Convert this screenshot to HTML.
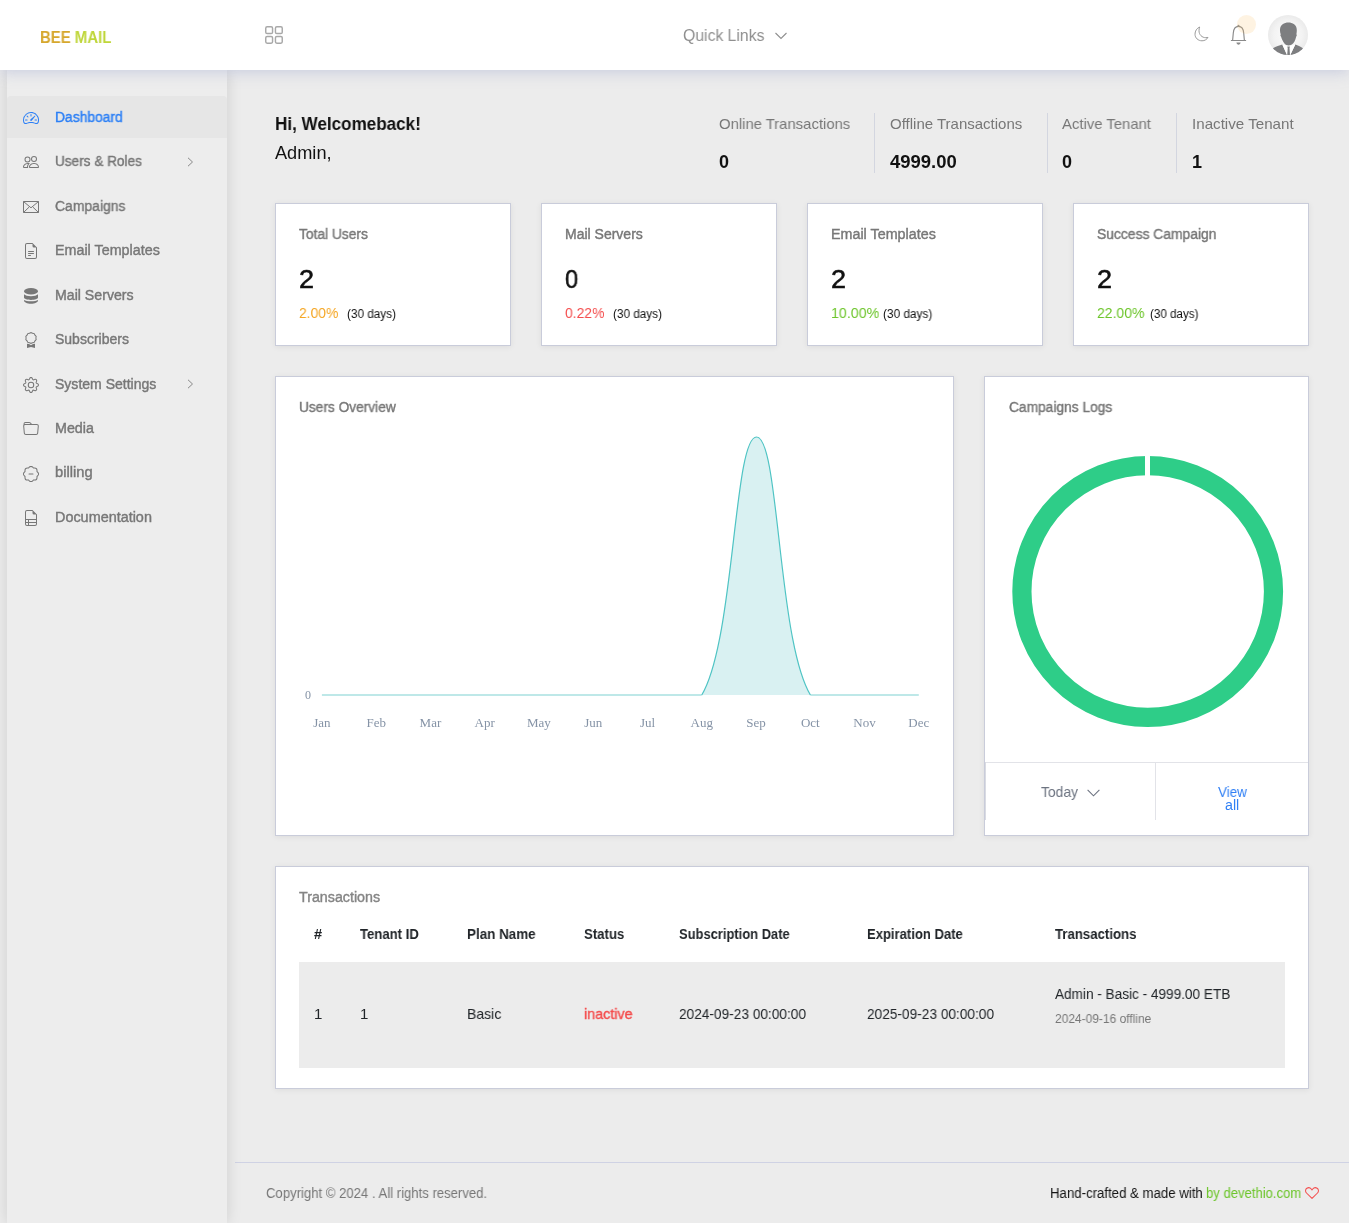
<!DOCTYPE html>
<html><head><meta charset="utf-8">
<style>
*{box-sizing:border-box;margin:0;padding:0}
html,body{width:1349px;height:1223px;overflow:hidden;background:#ececec;font-family:"Liberation Sans",sans-serif;}
.a{position:absolute;white-space:nowrap;line-height:1;will-change:transform}
#header{position:absolute;left:0;top:0;width:1349px;height:70px;background:#fff;z-index:5;box-shadow:0 2px 14px rgba(140,150,200,.38)}
#sidebar{position:absolute;left:7px;top:70px;width:220px;height:1153px;background:#ededed;box-shadow:0 0 14px rgba(0,0,0,.13);z-index:3}
.card{position:absolute;background:#fff;border:1px solid #c9ccda;box-shadow:0 1px 6px rgba(0,0,0,.07)}
.ico{position:absolute;left:16px}
.chev{position:absolute;left:180px}
</style></head>
<body>
<div id="header">
<div class="a" id="logo" style="left:40.4px;top:30.36px;font-size:16px;color:#000;font-weight:bold;transform:scaleX(0.9326);transform-origin:0 0;"><span style="color:#d6a72d">BEE</span> <span style="color:#bfd63a">MAIL</span></div>
<svg class="a" style="left:265px;top:26px" width="18" height="18" viewBox="0 0 18 18" fill="none" stroke="#a8a8a8" stroke-width="1.45"><rect x="0.75" y="0.75" width="6.8" height="6.8" rx="1.4"/><rect x="10.45" y="0.75" width="6.8" height="6.8" rx="1.4"/><rect x="0.75" y="10.45" width="6.8" height="6.8" rx="1.4"/><rect x="10.45" y="10.45" width="6.8" height="6.8" rx="1.4"/></svg>
<div class="a" id="ql" style="left:682.8px;top:28.46px;font-size:16px;color:#8f8f8f;font-weight:normal;transform:scaleX(0.9842);transform-origin:0 0;">Quick Links</div>
<svg class="a" style="left:775px;top:32px" width="12" height="8" viewBox="0 0 12 8" fill="none" stroke="#8f8f8f" stroke-width="1.1"><path d="M0.5 1 L6 6.5 L11.5 1"/></svg>
<svg class="a" style="left:1194px;top:26px" width="16" height="16" viewBox="0 0 16 16"><path fill="none" stroke="#9a9a9a" stroke-width="1" d="M5.7 1C2.8 2.2 1 5 1 8.2 1 12 4.2 14.8 8 14.8c2.6 0 4.8-1.3 6-3.4-.7.2-1.5.3-2.2.3C8 11.7 5 8.6 5 4.8c0-1.4.2-2.6.7-3.8z"/></svg>
<svg class="a" style="left:1230px;top:24px" width="18" height="22" viewBox="0 0 18 22"><circle cx="8.5" cy="1.7" r="1" fill="#8a8a8a"/><path fill="none" stroke="#8a8a8a" stroke-width="1.15" stroke-linejoin="round" d="M2.6 16.5 3.3 9C3.6 5 5.6 2.3 8.5 2.3S13.4 5 13.7 9l.7 7.5M.9 16.5h15.2"/><path fill="#8a8a8a" d="M6.4 18.5h4.2c-.3 1.3-1 2.2-2.1 2.2s-1.8-.9-2.1-2.2z"/></svg>
<div class="a" style="left:1236.5px;top:14.6px;width:18.8px;height:18.8px;border-radius:50%;background:rgba(248,196,110,.2)"></div>
<div class="a" style="left:1268px;top:15px;width:40px;height:40px;border-radius:50%;background:radial-gradient(circle at 50% 50%,#fdfdfd 0,#f3f3f3 50%,#dedede 100%);overflow:hidden"><svg width="40" height="40" viewBox="0 0 40 40"><path fill="#7d7e80" d="M20.4 7.5C24.5 7.5 28.8 9.5 28.8 15c0 2-.2 3.5-.4 4.3.6.5.5 1.7-.2 2.2-.6 2.5-1.3 4.4-1.7 5-1.5 2.5-3.5 4.1-5.9 4.1s-4.1-1.6-5.5-4.1c-.5-1-1.5-3-2.1-5-.7-.5-.8-1.7-.2-2.2-.5-1-.8-2.5-.8-4.3 0-5.5 4.3-7.5 8.4-7.5z"/><path fill="#7d7e80" d="M0 40 4.9 33.3C8 31.3 11.5 30.2 14.3 29.4L19 40zM40 40 35 33.3C32 31.3 30 30.2 27.3 29.4L22.3 40z"/><path fill="#fff" d="M14.3 29.4 20.6 31l6.7-1.6L22.3 40H19z"/><path fill="#7d7e80" d="M19.3 31.4h2.6l-.4 1.8.5 6.8h-2.8l.5-6.8z"/></svg></div>
</div>
<div id="sidebar">
  <div class="a" style="left:0;top:26px;width:220px;height:42px;background:#e6e6e6;border-radius:4px 4px 0 0"></div>
  <div class="a" id="nav0" style="left:47.8px;top:39.95px;font-size:14px;color:#2b7ff6;font-weight:normal;transform:scaleX(0.9882);transform-origin:0 0;-webkit-text-stroke:.4px #2b7ff6;">Dashboard</div>
  <div class="ico a" style="top:40.3px"><svg width="16" height="16" viewBox="0 0 16 16"><path fill="#2b7ff6" d="M8 4a.5.5 0 0 1 .5.5V6a.5.5 0 0 1-1 0V4.5A.5.5 0 0 1 8 4zM3.732 5.732a.5.5 0 0 1 .707 0l.915.914a.5.5 0 1 1-.708.708l-.914-.915a.5.5 0 0 1 0-.707zM2 10a.5.5 0 0 1 .5-.5h1.586a.5.5 0 0 1 0 1H2.5A.5.5 0 0 1 2 10zm9.5 0a.5.5 0 0 1 .5-.5h1.5a.5.5 0 0 1 0 1H12a.5.5 0 0 1-.5-.5zm.754-4.246a.389.389 0 0 0-.527-.02L7.547 9.31a.91.91 0 1 0 1.302 1.258l3.434-4.297a.389.389 0 0 0-.029-.518z"/><path fill="#2b7ff6" fill-rule="evenodd" d="M0 10a8 8 0 1 1 15.547 2.661c-.442 1.253-1.845 1.602-2.932 1.25C11.309 13.488 9.475 13 8 13c-1.474 0-3.31.488-4.615.911-1.087.352-2.49.003-2.932-1.25A7.988 7.988 0 0 1 0 10zm8-7a7 7 0 0 0-6.603 9.329c.203.575.923.876 1.68.63C4.397 12.533 6.358 12 8 12s3.604.532 4.923.96c.757.245 1.477-.056 1.68-.631A7 7 0 0 0 8 3z"/></svg></div>
  <div class="a" id="nav1" style="left:47.8px;top:84.39px;font-size:14px;color:#777;font-weight:normal;transform:scaleX(0.9709);transform-origin:0 0;-webkit-text-stroke:.4px #777;">Users &amp; Roles</div>
  <div class="ico a" style="top:83.7px"><svg width="16" height="16" viewBox="0 0 16 16"><path fill="#777" d="M15 14s1 0 1-1-1-4-5-4-5 3-5 4 1 1 1 1h8Zm-7.978-1A.261.261 0 0 1 7 12.996c.001-.264.167-1.03.76-1.72C8.312 10.629 9.282 10 11 10c1.717 0 2.687.63 3.24 1.276.593.69.758 1.457.76 1.72l-.008.002a.274.274 0 0 1-.014.002H7.022ZM11 7a2 2 0 1 0 0-4 2 2 0 0 0 0 4Zm3-2a3 3 0 1 1-6 0 3 3 0 0 1 6 0ZM6.936 9.28a5.88 5.88 0 0 0-1.23-.247A7.35 7.35 0 0 0 5 9c-4 0-5 3-5 4 0 .667.333 1 1 1h4.216A2.238 2.238 0 0 1 5 13c0-1.01.377-2.042 1.09-2.904.243-.294.526-.569.846-.816ZM4.92 10A5.493 5.493 0 0 0 4 13H1c0-.26.164-1.03.76-1.724.545-.636 1.492-1.256 3.16-1.275ZM1.5 5.5a3 3 0 1 1 6 0 3 3 0 0 1-6 0Zm3-2a2 2 0 1 0 0 4 2 2 0 0 0 0-4Z"/></svg></div>
  <svg class="chev a" style="top:86.7px" width="7" height="10" viewBox="0 0 7 10"><path d="M1 .8 5.5 5 1 9.2" fill="none" stroke="#888" stroke-width="1"/></svg>
  <div class="a" id="nav2" style="left:47.8px;top:128.83px;font-size:14px;color:#777;font-weight:normal;transform:scaleX(0.9946);transform-origin:0 0;-webkit-text-stroke:.4px #777;">Campaigns</div>
  <div class="ico a" style="top:129.2px"><svg width="16" height="16" viewBox="0 0 16 16"><path fill="none" stroke="#777" stroke-width="1" d="M.5 2.5h15v11H.5zM.5 2.5 8 8.8l7.5-6.3M.5 13.5l5.6-5.4M15.5 13.5 9.9 8.1"/></svg></div>
  <div class="a" id="nav3" style="left:47.8px;top:173.27px;font-size:14px;color:#777;font-weight:normal;transform:scaleX(1.0228);transform-origin:0 0;-webkit-text-stroke:.4px #777;">Email Templates</div>
  <div class="ico a" style="top:172.6px"><svg width="16" height="16" viewBox="0 0 16 16"><path fill="#777" d="M5 8.5a.5.5 0 0 1 .5-.5h5a.5.5 0 0 1 0 1h-5a.5.5 0 0 1-.5-.5zm0 2a.5.5 0 0 1 .5-.5h5a.5.5 0 0 1 0 1h-5a.5.5 0 0 1-.5-.5zm0 2a.5.5 0 0 1 .5-.5h2a.5.5 0 0 1 0 1h-2a.5.5 0 0 1-.5-.5z"/><path fill="#777" d="M14 14V4.5L9.5 0H4a2 2 0 0 0-2 2v12a2 2 0 0 0 2 2h8a2 2 0 0 0 2-2zM9.5 3A1.5 1.5 0 0 0 11 4.5h2V14a1 1 0 0 1-1 1H4a1 1 0 0 1-1-1V2a1 1 0 0 1 1-1h5.5v2z"/></svg></div>
  <div class="a" id="nav4" style="left:47.8px;top:217.71px;font-size:14px;color:#777;font-weight:normal;transform:scaleX(1.0106);transform-origin:0 0;-webkit-text-stroke:.4px #777;">Mail Servers</div>
  <div class="ico a" style="top:218.1px"><svg width="16" height="16" viewBox="0 0 16 16"><g transform="translate(1 0)" fill="#777"><ellipse cx="7" cy="3.2" rx="7" ry="3.2"/><path d="M0 6.3C1.2 7.6 3.8 8.3 7 8.3s5.8-.7 7-2v3.3c0 1.4-3.1 2.3-7 2.3s-7-.9-7-2.3z"/><path d="M0 12c1.2 1 3.8 1.3 7 1.3s5.8-.3 7-1.3v.6c0 1.8-3.1 3.2-7 3.2s-7-1.4-7-3.2z"/></g></svg></div>
  <div class="a" id="nav5" style="left:47.8px;top:262.15px;font-size:14px;color:#777;font-weight:normal;-webkit-text-stroke:.4px #777;">Subscribers</div>
  <div class="ico a" style="top:261.5px"><svg width="16" height="16" viewBox="0 0 16 16"><path fill="#777" d="M9.669.864 8 0 6.331.864l-1.858.282-.842 1.68-1.337 1.32L2.6 6l-.306 1.854 1.337 1.32.842 1.68 1.858.282L8 12l1.669-.864 1.858-.282.842-1.68 1.337-1.32L13.4 6l.306-1.854-1.337-1.32-.842-1.68L9.669.864zm1.196 1.193.684 1.365 1.086 1.072L12.387 6l.248 1.506-1.086 1.072-.684 1.365-1.51.229L8 10.874l-1.355-.702-1.51-.229-.684-1.365-1.086-1.072L3.614 6l-.25-1.506 1.087-1.072.684-1.365 1.51-.229L8 1.126l1.356.702 1.509.229z"/><path fill="#777" d="M4 11.794V16l4-1 4 1v-4.206l-2.018.306L8 13.126 6.018 12.1 4 11.794z"/></svg></div>
  <div class="a" id="nav6" style="left:47.8px;top:306.59px;font-size:14px;color:#777;font-weight:normal;transform:scaleX(1.0018);transform-origin:0 0;-webkit-text-stroke:.4px #777;">System Settings</div>
  <div class="ico a" style="top:306.9px"><svg width="16" height="16" viewBox="0 0 16 16"><path fill="#777" d="M8 4.754a3.246 3.246 0 1 0 0 6.492 3.246 3.246 0 0 0 0-6.492zM5.754 8a2.246 2.246 0 1 1 4.492 0 2.246 2.246 0 0 1-4.492 0z"/><path fill="#777" d="M9.796 1.343c-.527-1.79-3.065-1.79-3.592 0l-.094.319a.873.873 0 0 1-1.255.52l-.292-.16c-1.64-.892-3.433.902-2.54 2.541l.159.292a.873.873 0 0 1-.52 1.255l-.319.094c-1.79.527-1.79 3.065 0 3.592l.319.094a.873.873 0 0 1 .52 1.255l-.16.292c-.892 1.64.901 3.434 2.541 2.54l.292-.159a.873.873 0 0 1 1.255.52l.094.319c.527 1.79 3.065 1.79 3.592 0l.094-.319a.873.873 0 0 1 1.255-.52l.292.16c1.64.893 3.434-.902 2.54-2.541l-.159-.292a.873.873 0 0 1 .52-1.255l.319-.094c1.79-.527 1.79-3.065 0-3.592l-.319-.094a.873.873 0 0 1-.52-1.255l.16-.292c.893-1.64-.902-3.433-2.541-2.54l-.292.159a.873.873 0 0 1-1.255-.52l-.094-.319zm-2.633.283c.246-.835 1.428-.835 1.674 0l.094.319a1.873 1.873 0 0 0 2.693 1.115l.291-.16c.764-.415 1.6.42 1.184 1.185l-.159.292a1.873 1.873 0 0 0 1.116 2.692l.318.094c.835.246.835 1.428 0 1.674l-.319.094a1.873 1.873 0 0 0-1.115 2.693l.16.291c.415.764-.42 1.6-1.185 1.184l-.291-.159a1.873 1.873 0 0 0-2.693 1.116l-.094.318c-.246.835-1.428.835-1.674 0l-.094-.319a1.873 1.873 0 0 0-2.692-1.115l-.292.16c-.764.415-1.6-.42-1.184-1.185l.159-.291A1.873 1.873 0 0 0 1.945 8.93l-.319-.094c-.835-.246-.835-1.428 0-1.674l.319-.094A1.873 1.873 0 0 0 3.06 4.377l-.16-.292c-.415-.764.42-1.6 1.185-1.184l.292.159a1.873 1.873 0 0 0 2.692-1.115l.094-.319z"/></svg></div>
  <svg class="chev a" style="top:308.9px" width="7" height="10" viewBox="0 0 7 10"><path d="M1 .8 5.5 5 1 9.2" fill="none" stroke="#888" stroke-width="1"/></svg>
  <div class="a" id="nav7" style="left:47.8px;top:351.03px;font-size:14px;color:#777;font-weight:normal;transform:scaleX(1.0215);transform-origin:0 0;-webkit-text-stroke:.4px #777;">Media</div>
  <div class="ico a" style="top:351.4px"><svg width="16" height="16" viewBox="0 0 16 16"><path fill="#777" d="M.54 3.87.5 3a2 2 0 0 1 2-2h3.672a2 2 0 0 1 1.414.586l.828.828A2 2 0 0 0 9.828 3h3.982a2 2 0 0 1 1.992 2.181l-.637 7A2 2 0 0 1 13.174 14H2.826a2 2 0 0 1-1.991-1.819l-.637-7a1.99 1.99 0 0 1 .342-1.31zM2.19 4a1 1 0 0 0-.996 1.09l.637 7a1 1 0 0 0 .995.91h10.348a1 1 0 0 0 .995-.91l.637-7A1 1 0 0 0 13.81 4H2.19zm4.69-1.707A1 1 0 0 0 6.172 2H2.5a1 1 0 0 0-1 .981l.006.139C1.72 3.042 1.95 3 2.19 3h5.396l-.707-.707z"/></svg></div>
  <div class="a" id="nav8" style="left:47.8px;top:395.47px;font-size:14px;color:#777;font-weight:normal;transform:scaleX(1.0495);transform-origin:0 0;-webkit-text-stroke:.4px #777;">billing</div>
  <div class="ico a" style="top:395.8px"><svg width="16" height="16" viewBox="0 0 16 16"><path fill="#777" d="M5.5 8a.5.5 0 0 1 .5-.5h4a.5.5 0 0 1 0 1H6a.5.5 0 0 1-.5-.5z"/><path fill="#777" d="m10.273 2.513-.921-.944.715-.698.622.637.89-.011a2.89 2.89 0 0 1 2.924 2.924l-.01.89.636.622a2.89 2.89 0 0 1 0 4.134l-.637.622.011.89a2.89 2.89 0 0 1-2.924 2.924l-.89-.01-.622.636a2.89 2.89 0 0 1-4.134 0l-.622-.637-.89.011a2.89 2.89 0 0 1-2.924-2.924l.01-.89-.636-.622a2.89 2.89 0 0 1 0-4.134l.637-.622-.011-.89a2.89 2.89 0 0 1 2.924-2.924l.89.01.622-.636a2.89 2.89 0 0 1 4.134 0l-.715.698a1.89 1.89 0 0 0-2.704 0l-.92.944-1.32-.016a1.89 1.89 0 0 0-1.911 1.912l.016 1.318-.944.921a1.89 1.89 0 0 0 0 2.704l.944.92-.016 1.32a1.89 1.89 0 0 0 1.912 1.911l1.318-.016.921.944a1.89 1.89 0 0 0 2.704 0l.92-.944 1.32.016a1.89 1.89 0 0 0 1.911-1.912l-.016-1.318.944-.921a1.89 1.89 0 0 0 0-2.704l-.944-.92.016-1.32a1.89 1.89 0 0 0-1.912-1.911l-1.318.016z"/></svg></div>
  <div class="a" id="nav9" style="left:47.8px;top:439.91px;font-size:14px;color:#777;font-weight:normal;transform:scaleX(1.0289);transform-origin:0 0;-webkit-text-stroke:.4px #777;">Documentation</div>
  <div class="ico a" style="top:440.3px"><svg width="16" height="16" viewBox="0 0 16 16"><path fill="#777" d="M14 14V4.5L9.5 0H4a2 2 0 0 0-2 2v12a2 2 0 0 0 2 2h8a2 2 0 0 0 2-2zM9.5 3A1.5 1.5 0 0 0 11 4.5h2V9H3V2a1 1 0 0 1 1-1h5.5v2zM3 12v-2h2v2H3zm0 1h2v2H4a1 1 0 0 1-1-1v-1zm3 2v-2h7v1a1 1 0 0 1-1 1H6zm7-3H6v-2h7v2z"/></svg></div>
</div>
<div id="main">
<div class="a" id="hi" style="left:275.3px;top:114.02px;font-size:19px;color:#111;font-weight:bold;transform:scaleX(0.8986);transform-origin:0 0;">Hi, Welcomeback!</div>
<div class="a" id="admin" style="left:275px;top:143.76px;font-size:18px;color:#111;font-weight:normal;transform:scaleX(1.0095);transform-origin:0 0;">Admin,</div>
<div class="a" id="stl0" style="left:718.6px;top:116.00px;font-size:15px;color:#777;font-weight:normal;transform:scaleX(0.9895);transform-origin:0 0;">Online Transactions</div>
<div class="a" id="stl1" style="left:890px;top:116.00px;font-size:15px;color:#777;font-weight:normal;transform:scaleX(0.9979);transform-origin:0 0;">Offline Transactions</div>
<div class="a" id="stl2" style="left:1061.8px;top:116.00px;font-size:15px;color:#777;font-weight:normal;transform:scaleX(0.9914);transform-origin:0 0;">Active Tenant</div>
<div class="a" id="stl3" style="left:1191.6px;top:116.00px;font-size:15px;color:#777;font-weight:normal;transform:scaleX(1.0100);transform-origin:0 0;">Inactive Tenant</div>
<div class="a" id="stv0" style="left:718.6px;top:152.76px;font-size:18px;color:#111;font-weight:bold;">0</div>
<div class="a" id="stv1" style="left:890px;top:152.76px;font-size:18px;color:#111;font-weight:bold;transform:scaleX(1.0263);transform-origin:0 0;">4999.00</div>
<div class="a" id="stv2" style="left:1061.8px;top:152.76px;font-size:18px;color:#111;font-weight:bold;">0</div>
<div class="a" id="stv3" style="left:1191.6px;top:152.76px;font-size:18px;color:#111;font-weight:bold;">1</div>
<div class="a" style="left:874.0px;top:113px;width:1px;height:60px;background:#d3d6e0"></div>
<div class="a" style="left:1046.9px;top:113px;width:1px;height:60px;background:#d3d6e0"></div>
<div class="a" style="left:1176.0px;top:113px;width:1px;height:60px;background:#d3d6e0"></div>
<div class="card" style="left:275px;top:203px;width:236px;height:143px"></div>
<div class="a" id="ct0" style="left:299.3px;top:227.35px;font-size:14px;color:#777;font-weight:normal;transform:scaleX(0.9842);transform-origin:0 0;-webkit-text-stroke:.4px #777;">Total Users</div>
<div class="a" id="cn0" style="left:299.3px;top:266.84px;font-size:25px;color:#111;font-weight:normal;transform:scaleX(1.0833);transform-origin:0 0;-webkit-text-stroke:.5px #111">2</div>
<div class="a" id="cp0" style="left:299.3px;top:305.30px;font-size:15px;color:#f5a623;font-weight:normal;transform:scaleX(0.9242);transform-origin:0 0;">2.00%</div>
<div class="a" id="cd0" style="left:346.9px;top:307.84px;font-size:12px;color:#111;font-weight:normal;transform:scaleX(0.9800);transform-origin:0 0;">(30 days)</div>
<div class="card" style="left:541px;top:203px;width:236px;height:143px"></div>
<div class="a" id="ct1" style="left:565.3px;top:227.35px;font-size:14px;color:#777;font-weight:normal;transform:scaleX(0.9990);transform-origin:0 0;-webkit-text-stroke:.4px #777;">Mail Servers</div>
<div class="a" id="cn1" style="left:565.3px;top:266.84px;font-size:25px;color:#111;font-weight:normal;transform:scaleX(0.9462);transform-origin:0 0;-webkit-text-stroke:.5px #111">0</div>
<div class="a" id="cp1" style="left:565.3px;top:305.30px;font-size:15px;color:#f44d4d;font-weight:normal;transform:scaleX(0.9288);transform-origin:0 0;">0.22%</div>
<div class="a" id="cd1" style="left:613px;top:307.84px;font-size:12px;color:#111;font-weight:normal;transform:scaleX(0.9800);transform-origin:0 0;">(30 days)</div>
<div class="card" style="left:807px;top:203px;width:236px;height:143px"></div>
<div class="a" id="ct2" style="left:831.3px;top:227.35px;font-size:14px;color:#777;font-weight:normal;transform:scaleX(1.0228);transform-origin:0 0;-webkit-text-stroke:.4px #777;">Email Templates</div>
<div class="a" id="cn2" style="left:831.3px;top:266.84px;font-size:25px;color:#111;font-weight:normal;transform:scaleX(1.0833);transform-origin:0 0;-webkit-text-stroke:.5px #111">2</div>
<div class="a" id="cp2" style="left:831.3px;top:305.30px;font-size:15px;color:#6cc52a;font-weight:normal;transform:scaleX(0.9494);transform-origin:0 0;">10.00%</div>
<div class="a" id="cd2" style="left:883.2px;top:307.84px;font-size:12px;color:#111;font-weight:normal;transform:scaleX(0.9858);transform-origin:0 0;">(30 days)</div>
<div class="card" style="left:1073px;top:203px;width:236px;height:143px"></div>
<div class="a" id="ct3" style="left:1097.3px;top:227.35px;font-size:14px;color:#777;font-weight:normal;transform:scaleX(0.9904);transform-origin:0 0;-webkit-text-stroke:.4px #777;">Success Campaign</div>
<div class="a" id="cn3" style="left:1097.3px;top:266.84px;font-size:25px;color:#111;font-weight:normal;transform:scaleX(1.0833);transform-origin:0 0;-webkit-text-stroke:.5px #111">2</div>
<div class="a" id="cp3" style="left:1097.3px;top:305.30px;font-size:15px;color:#6cc52a;font-weight:normal;transform:scaleX(0.9327);transform-origin:0 0;">22.00%</div>
<div class="a" id="cd3" style="left:1150px;top:307.84px;font-size:12px;color:#111;font-weight:normal;transform:scaleX(0.9685);transform-origin:0 0;">(30 days)</div>
<div class="card" style="left:275px;top:376px;width:679px;height:460px"></div>
<div class="card" style="left:984px;top:376px;width:325px;height:460px"></div>
<div class="a" id="uo" style="left:298.9px;top:399.85px;font-size:14px;color:#777;font-weight:normal;transform:scaleX(0.9789);transform-origin:0 0;-webkit-text-stroke:.4px #777;">Users Overview</div>
<div class="a" id="cl" style="left:1008.9px;top:400.25px;font-size:14px;color:#777;font-weight:normal;transform:scaleX(0.9829);transform-origin:0 0;-webkit-text-stroke:.4px #777;">Campaigns Logs</div>
<div class="a" style="left:985px;top:762px;width:323px;height:1px;background:#e2e3e8"></div>
<div class="a" style="left:985px;top:762px;width:1px;height:58px;background:#d9dbe2"></div>
<div class="a" style="left:1155px;top:762px;width:1px;height:58px;background:#e2e3e8"></div>
<div class="a" id="today" style="left:1041px;top:783.80px;font-size:15px;color:#6c7380;font-weight:normal;transform:scaleX(0.9250);transform-origin:0 0;">Today</div>
<svg class="a" style="left:1087px;top:789px" width="13" height="8" viewBox="0 0 13 8"><path d="M.6 .8 6.5 6.8 12.4 .8" fill="none" stroke="#6c7380" stroke-width="1.1"/></svg>
<div class="a" id="view" style="left:1217.5px;top:784.65px;font-size:14px;color:#2f7ff5;font-weight:normal;transform:scaleX(0.9561);transform-origin:0 0;">View</div>
<div class="a" id="all" style="left:1224.9px;top:797.75px;font-size:14px;color:#2f7ff5;font-weight:normal;transform:scaleX(1.0190);transform-origin:0 0;">all</div>
<svg class="a" style="left:0;top:0;z-index:2" width="1349" height="1223" viewBox="0 0 1349 1223">
<path d="M701.75 695 C734.65 639.8 733.70 437 756.50 437 C779.30 437 777.50 639.8 810.40 695 Z" fill="#d9f1f2"/>
<path d="M321.90 695 L701.75 695 M810.40 695 L918.8 695" fill="none" stroke="#a9e1e1" stroke-width="1.5"/>
<path d="M701.75 695 C734.65 639.8 733.70 437 756.50 437 C779.30 437 777.50 639.8 810.40 695" fill="none" stroke="#4fc4c4" stroke-width="1.2"/>
<text x="305" y="698.8" font-family="Liberation Serif" font-size="12" fill="#8593a6">0</text>
<text x="321.90" y="726.8" text-anchor="middle" font-family="Liberation Serif" font-size="13" fill="#8593a6">Jan</text>
<text x="376.16" y="726.8" text-anchor="middle" font-family="Liberation Serif" font-size="13" fill="#8593a6">Feb</text>
<text x="430.43" y="726.8" text-anchor="middle" font-family="Liberation Serif" font-size="13" fill="#8593a6">Mar</text>
<text x="484.69" y="726.8" text-anchor="middle" font-family="Liberation Serif" font-size="13" fill="#8593a6">Apr</text>
<text x="538.95" y="726.8" text-anchor="middle" font-family="Liberation Serif" font-size="13" fill="#8593a6">May</text>
<text x="593.22" y="726.8" text-anchor="middle" font-family="Liberation Serif" font-size="13" fill="#8593a6">Jun</text>
<text x="647.48" y="726.8" text-anchor="middle" font-family="Liberation Serif" font-size="13" fill="#8593a6">Jul</text>
<text x="701.75" y="726.8" text-anchor="middle" font-family="Liberation Serif" font-size="13" fill="#8593a6">Aug</text>
<text x="756.01" y="726.8" text-anchor="middle" font-family="Liberation Serif" font-size="13" fill="#8593a6">Sep</text>
<text x="810.27" y="726.8" text-anchor="middle" font-family="Liberation Serif" font-size="13" fill="#8593a6">Oct</text>
<text x="864.54" y="726.8" text-anchor="middle" font-family="Liberation Serif" font-size="13" fill="#8593a6">Nov</text>
<text x="918.80" y="726.8" text-anchor="middle" font-family="Liberation Serif" font-size="13" fill="#8593a6">Dec</text>
<circle cx="1147.7" cy="591.5" r="125.8" fill="none" stroke="#2ecd88" stroke-width="19.2"/>
<rect x="1145" y="454" width="5" height="24" fill="#fff"/>
</svg>
<div class="card" style="left:275px;top:866px;width:1034px;height:223px"></div>
<div class="a" id="trt" style="left:299.2px;top:889.95px;font-size:14px;color:#858585;font-weight:normal;transform:scaleX(1.0179);transform-origin:0 0;-webkit-text-stroke:.4px #858585;">Transactions</div>
<div class="a" id="th0" style="left:314.3px;top:926.93px;font-size:14.5px;color:#212529;font-weight:bold;">#</div>
<div class="a" id="th1" style="left:359.9px;top:926.93px;font-size:14.5px;color:#212529;font-weight:bold;transform:scaleX(0.9047);transform-origin:0 0;">Tenant ID</div>
<div class="a" id="th2" style="left:467.2px;top:926.93px;font-size:14.5px;color:#212529;font-weight:bold;transform:scaleX(0.9255);transform-origin:0 0;">Plan Name</div>
<div class="a" id="th3" style="left:584.2px;top:926.93px;font-size:14.5px;color:#212529;font-weight:bold;transform:scaleX(0.9090);transform-origin:0 0;">Status</div>
<div class="a" id="th4" style="left:678.8px;top:926.93px;font-size:14.5px;color:#212529;font-weight:bold;transform:scaleX(0.8920);transform-origin:0 0;">Subscription Date</div>
<div class="a" id="th5" style="left:867.1px;top:926.93px;font-size:14.5px;color:#212529;font-weight:bold;transform:scaleX(0.9004);transform-origin:0 0;">Expiration Date</div>
<div class="a" id="th6" style="left:1055.1px;top:926.93px;font-size:14.5px;color:#212529;font-weight:bold;transform:scaleX(0.9099);transform-origin:0 0;">Transactions</div>
<div class="a" style="left:299px;top:962px;width:986px;height:106px;background:#ececec"></div>
<div class="a" id="td0" style="left:314.3px;top:1006.40px;font-size:15px;color:#212529;font-weight:normal;">1</div>
<div class="a" id="td1" style="left:359.9px;top:1006.40px;font-size:15px;color:#212529;font-weight:normal;">1</div>
<div class="a" id="td2" style="left:467.2px;top:1006.40px;font-size:15px;color:#212529;font-weight:normal;transform:scaleX(0.9349);transform-origin:0 0;">Basic</div>
<div class="a" id="td3" style="left:584.2px;top:1006.40px;font-size:15px;color:#f44d4d;font-weight:normal;transform:scaleX(0.9553);transform-origin:0 0;-webkit-text-stroke:.4px #f44d4d;">inactive</div>
<div class="a" id="td4" style="left:678.8px;top:1006.40px;font-size:15px;color:#212529;font-weight:normal;transform:scaleX(0.9118);transform-origin:0 0;">2024-09-23 00:00:00</div>
<div class="a" id="td5" style="left:867.1px;top:1006.40px;font-size:15px;color:#212529;font-weight:normal;transform:scaleX(0.9121);transform-origin:0 0;">2025-09-23 00:00:00</div>
<div class="a" id="adm" style="left:1055.1px;top:987.15px;font-size:14px;color:#212529;font-weight:normal;transform:scaleX(0.9711);transform-origin:0 0;">Admin - Basic - 4999.00 ETB</div>
<div class="a" id="off" style="left:1055.1px;top:1013.22px;font-size:12.5px;color:#777;font-weight:normal;transform:scaleX(0.9576);transform-origin:0 0;">2024-09-16 offline</div>
<div class="a" style="left:235px;top:1162px;width:1114px;height:1px;background:#cfd2e4"></div>
<div class="a" id="copy" style="left:266px;top:1186.45px;font-size:14px;color:#777;font-weight:normal;transform:scaleX(0.9371);transform-origin:0 0;">Copyright © 2024 . All rights reserved.</div>
<div class="a" id="hand" style="left:1049.6px;top:1186.25px;font-size:14px;color:#151515;font-weight:normal;transform:scaleX(0.9438);transform-origin:0 0;">Hand-crafted &amp; made with</div>
<div class="a" id="dev" style="left:1205.6px;top:1186.25px;font-size:14px;color:#6cc52a;font-weight:normal;transform:scaleX(0.9343);transform-origin:0 0;">by devethio.com</div>
<svg class="a" style="left:1304.5px;top:1187px" width="14" height="12.2" viewBox="0 0 15 13"><path d="M7.5 12.2 1.6 6.4C.1 4.9.3 2.4 2 1.3 3.6.3 5.6.7 6.7 2.1l.8 1 .8-1c1.1-1.4 3.1-1.8 4.7-.8 1.7 1.1 1.9 3.6.4 5.1z" fill="none" stroke="#f44d4d" stroke-width="1.1"/></svg>
</div>
</body></html>
